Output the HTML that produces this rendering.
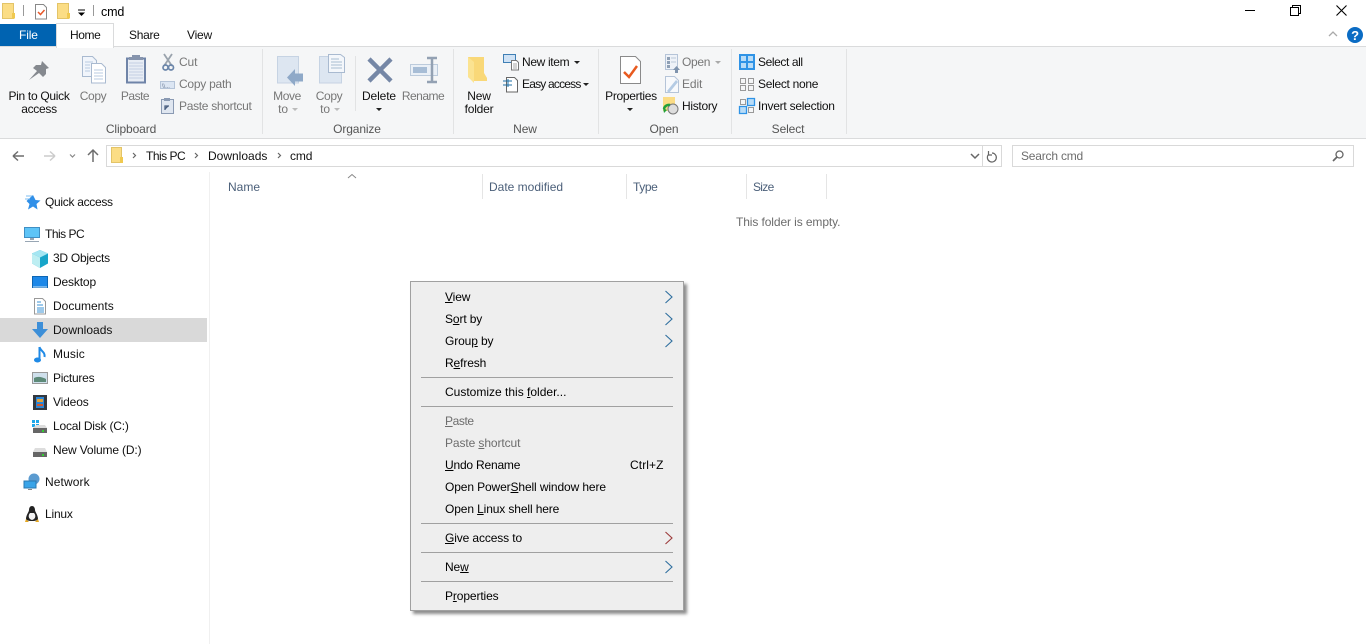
<!DOCTYPE html>
<html><head><meta charset="utf-8"><style>
html,body{margin:0;padding:0;background:#fff;width:1366px;height:644px;overflow:hidden}
body{font-family:"Liberation Sans",sans-serif;font-size:12px;color:#111;position:relative;letter-spacing:-.12px}
.t{position:absolute;line-height:16px;white-space:nowrap}
.c{position:absolute;line-height:13px;text-align:center;white-space:nowrap;transform:translateX(-50%)}
.g{color:#777}
.b{position:absolute}
svg{position:absolute;overflow:visible}
.m{color:#000}
.d{color:#6d6d6d}
.h{color:#4c607a}
.gl{color:#555}
</style></head><body>

<!-- title bar -->
<svg style="left:0;top:0" width="100" height="24">
<path d="M2.500 3.500h11v15h-11z" fill="#fbdd85" stroke="#e3c468"/><path d="M12 13h3v5.500h-3z" fill="#f0c94f"/>
<path d="M23.500 5v11" stroke="#999"/>
<path d="M35.500 4.500h8l3 3v11.500h-11z" fill="#fff" stroke="#888"/><path d="M38 12l2.500 2.500 4-4.500" fill="none" stroke="#e8582a" stroke-width="1.500"/>
<path d="M57.500 3.500h11v15h-11z" fill="#fbdd85" stroke="#e3c468"/><path d="M67 13h3v5.500h-3z" fill="#f0c94f"/>
<path d="M78 10h7" stroke="#000"/><path d="M78 12.500h7l-3.500 3.500z" fill="#000"/>
<path d="M93.500 5v11" stroke="#999"/>
</svg>
<span class="t m" style="left:101px;top:4px;font-size:12.500px">cmd</span>
<svg style="left:1240px;top:0" width="126" height="24">
<path d="M5 10.500h10" stroke="#000"/>
<path d="M50.500 7.500h8v8h-8z" fill="none" stroke="#000"/><path d="M52.500 7.500v-2h8v8h-2" fill="none" stroke="#000"/>
<path d="M96.500 5.500l10 10M106.500 5.500l-10 10" stroke="#000" stroke-width="1.100"/>
</svg>

<!-- tabs -->
<div class="b" style="left:0;top:24px;width:56px;height:22px;background:#0063b1"></div>
<span class="t" style="left:19px;top:27px;color:#fff">File</span>
<div class="b" style="left:56px;top:23px;width:56px;height:24px;background:#fff;border:1px solid #dadbdc;border-bottom:0;z-index:2"></div>
<span class="t" style="left:70px;top:27px;z-index:3;letter-spacing:-.4px">Home</span>
<span class="t" style="left:129px;top:27px;letter-spacing:-.3px">Share</span>
<span class="t" style="left:187px;top:27px;letter-spacing:-.2px">View</span>
<svg style="left:1320px;top:24px" width="46" height="24">
<path d="M9 12l4-4 4 4" fill="none" stroke="#aaa" stroke-width="1.300"/>
<circle cx="35" cy="11" r="8" fill="#0b6cc4"/><text x="35" y="16" text-anchor="middle" font-size="13" font-weight="bold" fill="#fff" font-family="Liberation Sans">?</text>
</svg>

<!-- ribbon -->
<div class="b" style="left:0;top:46px;width:1366px;height:91px;background:#f5f6f7;border-top:1px solid #dadbdc;border-bottom:1px solid #dadbdc"></div>
<div class="b" style="left:262px;top:49px;width:1px;height:85px;background:#e2e3e4"></div>
<div class="b" style="left:355px;top:56px;width:1px;height:55px;background:#e2e3e4"></div>
<div class="b" style="left:453px;top:49px;width:1px;height:85px;background:#e2e3e4"></div>
<div class="b" style="left:598px;top:49px;width:1px;height:85px;background:#e2e3e4"></div>
<div class="b" style="left:731px;top:49px;width:1px;height:85px;background:#e2e3e4"></div>
<div class="b" style="left:846px;top:49px;width:1px;height:85px;background:#e2e3e4"></div>

<svg style="left:0;top:47px" width="850" height="70">
<!-- pin -->
<path d="M29 33l8-9-4-3 3-3h5l1-4 7 7-3 1v5l-3 3-4-4z" fill="#85898f"/>
<!-- copy -->
<path d="M82.500 9.500h10l4 4v16h-14z" fill="#f1f5fb" stroke="#a9bad0"/><path d="M91.500 16.500h10l4 4v15.500h-14z" fill="#fff" stroke="#a9bad0"/>
<path d="M85 15h8M85 18h5M85 21h5M85 24h5M94 23h9M94 26h9M94 29h9M94 32h9" stroke="#b9cbe0"/>
<!-- paste -->
<path d="M127 11.500h18v24h-18z" fill="#e8edf5" stroke="#6f84a8" stroke-width="2"/>
<path d="M132 8h8v2h3v3h-14v-3h3z" fill="#8694ad"/><path d="M129 16h14M129 19h14M129 22h14M129 25h14M129 28h14M129 31h14" stroke="#c4d0e4"/>
<!-- cut -->
<path d="M164 7l8 12M172 7l-8 12" stroke="#9aa3ad" stroke-width="1.800"/><circle cx="165.500" cy="20.500" r="2.500" fill="none" stroke="#6b86aa" stroke-width="1.700"/><circle cx="171" cy="20.500" r="2.500" fill="none" stroke="#6b86aa" stroke-width="1.700"/>
<!-- copy path -->
<path d="M160.500 34.500h14v7h-14z" fill="#dce6f3" stroke="#b5c4d8"/><text x="162" y="41" font-size="6" fill="#6b7c96" font-family="Liberation Sans">\\...</text>
<!-- paste shortcut -->
<path d="M161.500 52.500h12v14h-12z" fill="#dfe6f0" stroke="#8a9ab3"/><path d="M164 51h6v3h-6z" fill="#8a9ab3"/><path d="M165 62v-4h4M168 58l-3 3" fill="none" stroke="#4a5f80" stroke-width="1.300" transform="translate(0 1)"/>
<!-- move to -->
<path d="M277.500 9.500h21v26.500h-21z" fill="#dde6f1" stroke="#c6d3e3"/><path d="M287 30.500l8-8.500v4.500h8v8h-8v4.500z" fill="#8fa9c8"/>
<!-- copy to -->
<path d="M319.500 9.500h22v26.500h-22z" fill="#dde6f1" stroke="#c6d3e3"/><path d="M328.500 7.500h12l4 3v15h-16z" fill="#f4f7fb" stroke="#a9bad0"/><path d="M331 12h8M331 15h11M331 18h11M331 21h11" stroke="#a9bcd2"/>
<!-- delete -->
<path d="M369 12l22 22M391 12l-22 22" stroke="#7587a6" stroke-width="4.500"/>
<!-- rename -->
<path d="M410.500 17.500h27v11h-27z" fill="#eaf0f7" stroke="#bccbdc"/><path d="M413 20h14v6h-14z" fill="#a7bdd6"/>
<path d="M427 11h10M427 35h10M432 11v24" stroke="#93a1b3" stroke-width="2.500"/>
<!-- new folder -->
<path d="M468 10h16v16l3 5v3h-14l-5-4z" fill="#f9d878"/><path d="M468 10l6 5v21l-6-6z" fill="#fbe391"/>
<!-- new item -->
<path d="M503.500 7.500h12v8h-12z" fill="#cfe2f5" stroke="#3f7fb5"/><path d="M511.500 13.500h5l2 2v7.500h-7z" fill="#fff" stroke="#777"/><path d="M513 17h4M513 19h4M513 21h4" stroke="#aaa"/>
<!-- easy access -->
<path d="M506.500 30.500h8l3 3v11.500h-11z" fill="#fff" stroke="#666"/><path d="M503 34h9M503 38h9M508 32v8" stroke="#1d6fa5"/>
<!-- properties -->
<path d="M620.500 9.500h15l5 5v22h-20z" fill="#fff" stroke="#8a8a8a"/><path d="M624 25l5 5 8-11" fill="none" stroke="#e85a1f" stroke-width="2.500"/>
<!-- open -->
<path d="M665.500 7.500h12v15h-12z" fill="#eef2f8" stroke="#b5c4d8"/><path d="M667 10h3v3h-3zM667 14h3v3h-3zM667 18h3v3h-3z" fill="#8fa0b5"/><path d="M671 11h5M671 15h5" stroke="#bbc8d8"/><path d="M673 23l3.500-4 3.500 4h-2v3h-3v-3z" fill="#7e93ad"/>
<!-- edit -->
<path d="M665.500 29.500h9l4 4v12h-13z" fill="#f7f9fc" stroke="#b5c4d8"/><path d="M667 44l9-11 2 2-9 11z" fill="#b4cbe4"/>
<!-- history -->
<path d="M663 50h12v14h-12z" fill="#fbdc85"/><circle cx="673" cy="62" r="5" fill="#ddd" stroke="#777"/><path d="M664 62a5 5 0 0 1 6-4" fill="none" stroke="#23a13a" stroke-width="2.500"/><path d="M664 66l-1-5 4 2z" fill="#23a13a"/>
<!-- select all -->
<path d="M739 7h16v16h-16z" fill="#2f93e6"/><path d="M741 9h5v5h-5zM748 9h5v5h-5zM741 16h5v5h-5zM748 16h5v5h-5z" fill="#b9dcf7"/>
<!-- select none -->
<path d="M740.500 31.500h5v5h-5zM748.500 31.500h5v5h-5zM740.500 38.500h5v5h-5zM748.500 38.500h5v5h-5z" fill="none" stroke="#999"/>
<!-- invert -->
<path d="M740.500 52.500h5v5h-5zM748.500 60.500h5v5h-5z" fill="none" stroke="#999"/>
<path d="M747.500 51.500h7v7h-7zM739.500 59.500h7v7h-7z" fill="#b9dcf7" stroke="#2f93e6" stroke-width="1.300"/>
<!-- small carets -->
<path d="M574 14h6l-3 3z" fill="#222"/><path d="M583 36h6l-3 3z" fill="#222"/>
<path d="M715 14h6l-3 3z" fill="#aaa"/>
</svg>

<div class="c" style="left:39px;top:90px;letter-spacing:-.3px">Pin to Quick<br>access</div>
<div class="c g" style="left:93px;top:90px;letter-spacing:-.4px">Copy</div>
<div class="c g" style="left:135px;top:90px;letter-spacing:-.5px">Paste</div>
<span class="t g" style="left:179px;top:54px">Cut</span>
<span class="t g" style="left:179px;top:76px;letter-spacing:-.25px">Copy path</span>
<span class="t g" style="left:179px;top:98px;letter-spacing:-.3px">Paste shortcut</span>
<div class="c gl" style="left:131px;top:123px">Clipboard</div>
<div class="c g" style="left:287px;top:90px;letter-spacing:-.4px">Move</div>
<div class="c g" style="left:283px;top:103px">to</div>
<div class="c g" style="left:329px;top:90px;letter-spacing:-.4px">Copy</div>
<div class="c g" style="left:325px;top:103px">to</div>
<svg style="left:0;top:0" width="700" height="120">
<path d="M292 108h6l-3 3zM334 108h6l-3 3z" fill="#bbb"/>
<path d="M376 108h6l-3 3zM627 108h6l-3 3z" fill="#222"/>
</svg>
<div class="c" style="left:379px;top:90px">Delete</div>
<div class="c g" style="left:423px;top:90px;letter-spacing:-.5px">Rename</div>
<div class="c gl" style="left:357px;top:123px">Organize</div>
<div class="c" style="left:479px;top:90px;letter-spacing:-.2px">New<br>folder</div>
<span class="t" style="left:522px;top:54px;letter-spacing:-.35px">New item</span>
<span class="t" style="left:522px;top:76px;letter-spacing:-.8px">Easy access</span>
<div class="c gl" style="left:525px;top:123px">New</div>
<div class="c" style="left:631px;top:90px;letter-spacing:-.3px">Properties</div>
<span class="t g" style="left:682px;top:54px;letter-spacing:-.3px">Open</span>
<span class="t g" style="left:682px;top:76px">Edit</span>
<span class="t" style="left:682px;top:98px;letter-spacing:-.3px">History</span>
<div class="c gl" style="left:664px;top:123px">Open</div>
<span class="t" style="left:758px;top:54px;letter-spacing:-.4px">Select all</span>
<span class="t" style="left:758px;top:76px;letter-spacing:-.3px">Select none</span>
<span class="t" style="left:758px;top:98px;letter-spacing:-.25px">Invert selection</span>
<div class="c gl" style="left:788px;top:123px">Select</div>

<!-- address row -->
<svg style="left:0;top:140px" width="110" height="32">
<path d="M24 16h-11M13 16l5-4.500M13 16l5 4.500" fill="none" stroke="#6d6d6d" stroke-width="1.500"/>
<path d="M44 16h11M55 16l-5-4.500M55 16l-5 4.500" fill="none" stroke="#ccc" stroke-width="1.500"/>
<path d="M70 14.500l2.500 2.500 2.500-2.500" fill="none" stroke="#888" stroke-width="1.200"/>
<path d="M93 22v-12M88 15l5-5 5 5" fill="none" stroke="#6d6d6d" stroke-width="1.500"/>
</svg>
<div class="b" style="left:106px;top:145px;width:894px;height:20px;border:1px solid #d9d9d9;background:#fff"></div>
<svg style="left:110px;top:146px" width="210" height="20">
<path d="M1.500 1.500h10v15h-10z" fill="#fbdd85" stroke="#e3c468"/><path d="M10 11h3v6h-3z" fill="#f0c94f"/>
<path d="M23 7l2.500 2.500-2.500 2.500M85 7l2.500 2.500-2.500 2.500M168 7l2.500 2.500-2.500 2.500" fill="none" stroke="#666" stroke-width="1.200"/>
</svg>
<span class="t" style="left:146px;top:148px;letter-spacing:-.5px">This PC</span>
<span class="t" style="left:208px;top:148px;letter-spacing:0">Downloads</span>
<span class="t" style="left:290px;top:148px">cmd</span>
<div class="b" style="left:982px;top:146px;width:1px;height:20px;background:#d9d9d9"></div>
<svg style="left:970px;top:146px" width="32" height="20">
<path d="M1 8l4 4 4-4" fill="none" stroke="#666" stroke-width="1.500"/>
<path d="M18.500 7.500a4.500 4.500 0 1 0 3.500-1.500M18.500 4v4h3.500" fill="none" stroke="#666" stroke-width="1.200" transform="translate(0 1)"/>
</svg>
<div class="b" style="left:1012px;top:145px;width:340px;height:20px;border:1px solid #d9d9d9;background:#fff"></div>
<span class="t" style="left:1021px;top:148px;color:#6d6d6d;letter-spacing:-.2px">Search cmd</span>
<svg style="left:1330px;top:148px" width="16" height="16">
<circle cx="9.500" cy="6.500" r="3.500" fill="none" stroke="#666" stroke-width="1.300"/><path d="M7 9l-4 4" stroke="#666" stroke-width="1.700"/>
</svg>

<!-- column headers -->
<div class="b" style="left:209px;top:172px;width:1px;height:472px;background:#f0f0f0"></div>
<svg style="left:346px;top:172px" width="14" height="8"><path d="M2 6l4-3.500 4 3.500" fill="none" stroke="#888"/></svg>
<span class="t h" style="left:228px;top:179px;letter-spacing:0">Name</span>
<div class="b" style="left:482px;top:174px;width:1px;height:25px;background:#e5e5e5"></div>
<span class="t h" style="left:489px;top:179px;letter-spacing:0">Date modified</span>
<div class="b" style="left:626px;top:174px;width:1px;height:25px;background:#e5e5e5"></div>
<span class="t h" style="left:633px;top:179px;letter-spacing:-.4px">Type</span>
<div class="b" style="left:746px;top:174px;width:1px;height:25px;background:#e5e5e5"></div>
<span class="t h" style="left:753px;top:179px;letter-spacing:-.7px">Size</span>
<div class="b" style="left:826px;top:174px;width:1px;height:25px;background:#e5e5e5"></div>
<span class="t d" style="left:736px;top:214px;letter-spacing:-.1px">This folder is empty.</span>

<!-- sidebar -->
<div class="b" style="left:0;top:318px;width:207px;height:24px;background:#d9d9d9"></div>
<svg style="left:0;top:190px" width="60" height="340">
<!-- quick access -->
<path d="M33 5l2.500 5 5 .5-4 3.500 1 5.500-4.500-3-5 3 1.500-5.500-3-3z" fill="#2f8fe8"/><path d="M26 6h6M25 9h5" stroke="#7cbcf0"/>
<!-- this pc -->
<path d="M24.500 37.500h15v10h-15z" fill="#5ec4f7" stroke="#3f8fc4"/><path d="M30 48h4v2h-4z" fill="#98a6b4"/><path d="M25 51.500h14" stroke="#98a6b4"/>
<!-- 3d -->
<path d="M40 60l8 3.500v10l-8 4.500-8-4.500v-10z" fill="#17a5c9"/><path d="M40 60l8 3.500-8 4-8-4z" fill="#a5e6f2"/><path d="M32 63.500l8 4v10.500l-8-4.500z" fill="#bdeef2"/>
<!-- desktop -->
<path d="M32.500 86.500h15v11h-15z" fill="#1d88e8" stroke="#0d66b4"/><path d="M33 97h14" stroke="#cbe6f8"/>
<!-- documents -->
<path d="M34.500 108.500h8l3 3v12.500h-11z" fill="#fff" stroke="#999"/><path d="M37 112h4M37 115h6M37 118h7M37 120h7M37 122h7" stroke="#3b93d4"/>
<!-- downloads -->
<path d="M37 132h6v7h5l-8 9-8-9h5z" fill="#3d8fd8"/>
<!-- music -->
<path d="M39.500 157v13" stroke="#1f8ae6" stroke-width="2"/><path d="M39.500 157c1 4 6 5 5 10" fill="none" stroke="#1f8ae6" stroke-width="2"/><ellipse cx="37.500" cy="170" rx="3.500" ry="2.500" fill="#1f8ae6"/>
<!-- pictures -->
<path d="M32.500 182.500h15v11h-15z" fill="#cfe0ec" stroke="#999"/><path d="M34 188c4-2 8-1 12 1v3h-12z" fill="#5d8a79"/>
<!-- videos -->
<path d="M33 205h14v15h-14z" fill="#33383f"/><path d="M36 207h8v11h-8z" fill="#2a86d8"/><path d="M37 209h6v3h-6z" fill="#e2a23a"/><path d="M37 214h6v2h-6z" fill="#d8582a"/>
<!-- C -->
<path d="M32 230h3v3h-3zM36 230h3v3h-3zM32 234h3v3h-3zM36 234h3v3h-3z" fill="#1fa8ea"/>
<path d="M36 235h9l2 3h-14z" fill="#ddd"/><path d="M33 238h14v5h-14z" fill="#666"/><path d="M42 240h2v2h-2z" fill="#3c3"/>
<!-- D -->
<path d="M35 258h10l2 4h-14z" fill="#ddd"/><path d="M33 262h14v5h-14z" fill="#666"/><path d="M42 264h2v2h-2z" fill="#3c3"/>
<!-- network -->
<circle cx="34" cy="289" r="5.500" fill="#5b9bd0"/><path d="M24 291h12v7h-12z" fill="#39a4e8" stroke="#2a78b0"/><path d="M28 299h4v1h-4z" fill="#888"/>
<!-- linux -->
<path d="M32 316c-2 0-3 2-3 4 0 2-3 5-3 9 0 1 2 2 6 2s6-1 6-2c0-4-3-7-3-9 0-2-1-4-3-4z" fill="#222"/><path d="M30 323c-2 2-2 6 2 7 4-1 4-5 2-7z" fill="#f2f2f2"/><path d="M26 329l-1 3h4zM38 329l1 3h-4z" fill="#e5a722"/>
</svg>
<span class="t" style="left:45px;top:194px;letter-spacing:-.3px">Quick access</span>
<span class="t" style="left:45px;top:226px;letter-spacing:-.5px">This PC</span>
<span class="t" style="left:53px;top:250px;letter-spacing:-.25px">3D Objects</span>
<span class="t" style="left:53px;top:274px;letter-spacing:-.15px">Desktop</span>
<span class="t" style="left:53px;top:298px;letter-spacing:0">Documents</span>
<span class="t" style="left:53px;top:322px;letter-spacing:0">Downloads</span>
<span class="t" style="left:53px;top:346px;letter-spacing:.1px">Music</span>
<span class="t" style="left:53px;top:370px;letter-spacing:-.25px">Pictures</span>
<span class="t" style="left:53px;top:394px;letter-spacing:-.15px">Videos</span>
<span class="t" style="left:53px;top:418px;letter-spacing:-.2px">Local Disk (C:)</span>
<span class="t" style="left:53px;top:442px;letter-spacing:-.15px">New Volume (D:)</span>
<span class="t" style="left:45px;top:474px;letter-spacing:.1px">Network</span>
<span class="t" style="left:45px;top:506px;letter-spacing:-.2px">Linux</span>

<!-- context menu -->
<div class="b" style="left:410px;top:281px;width:272px;height:328px;background:#eeeeee;border:1px solid #a0a0a0;box-shadow:3px 3px 3px rgba(0,0,0,.45)"></div>
<div class="b" style="left:421px;top:377px;width:252px;height:1px;background:#a0a0a0"></div>
<div class="b" style="left:421px;top:406px;width:252px;height:1px;background:#a0a0a0"></div>
<div class="b" style="left:421px;top:523px;width:252px;height:1px;background:#a0a0a0"></div>
<div class="b" style="left:421px;top:552px;width:252px;height:1px;background:#a0a0a0"></div>
<div class="b" style="left:421px;top:581px;width:252px;height:1px;background:#a0a0a0"></div>
<span class="t m" style="left:445px;top:289px"><u>V</u>iew</span>
<span class="t m" style="left:445px;top:311px">S<u>o</u>rt by</span>
<span class="t m" style="left:445px;top:333px">Grou<u>p</u> by</span>
<span class="t m" style="left:445px;top:355px">R<u>e</u>fresh</span>
<span class="t m" style="left:445px;top:384px;letter-spacing:0">Customize this <u>f</u>older...</span>
<span class="t" style="left:445px;top:413px;color:#6d6d6d;letter-spacing:-.4px"><u>P</u>aste</span>
<span class="t" style="left:445px;top:435px;color:#6d6d6d;letter-spacing:-.1px">Paste <u>s</u>hortcut</span>
<span class="t m" style="left:445px;top:457px;letter-spacing:-.2px"><u>U</u>ndo Rename</span>
<span class="t m" style="left:630px;top:457px;letter-spacing:.1px">Ctrl+Z</span>
<span class="t m" style="left:445px;top:479px">Open Power<u>S</u>hell window here</span>
<span class="t m" style="left:445px;top:501px">Open <u>L</u>inux shell here</span>
<span class="t m" style="left:445px;top:530px"><u>G</u>ive access to</span>
<span class="t m" style="left:445px;top:559px">Ne<u>w</u></span>
<span class="t m" style="left:445px;top:588px">P<u>r</u>operties</span>
<svg style="left:660px;top:285px" width="16" height="320">
<g fill="none" stroke="#2f6f9f" stroke-width="1.100">
<path d="M5.500 6l6.500 6-6.500 6M5.500 28l6.500 6-6.500 6M5.500 50l6.500 6-6.500 6M5.500 276l6.500 6-6.500 6"/>
</g>
<path d="M5.500 247l6.500 6-6.500 6" fill="none" stroke="#9c3b3b" stroke-width="1.100"/>
</svg>
</body></html>
